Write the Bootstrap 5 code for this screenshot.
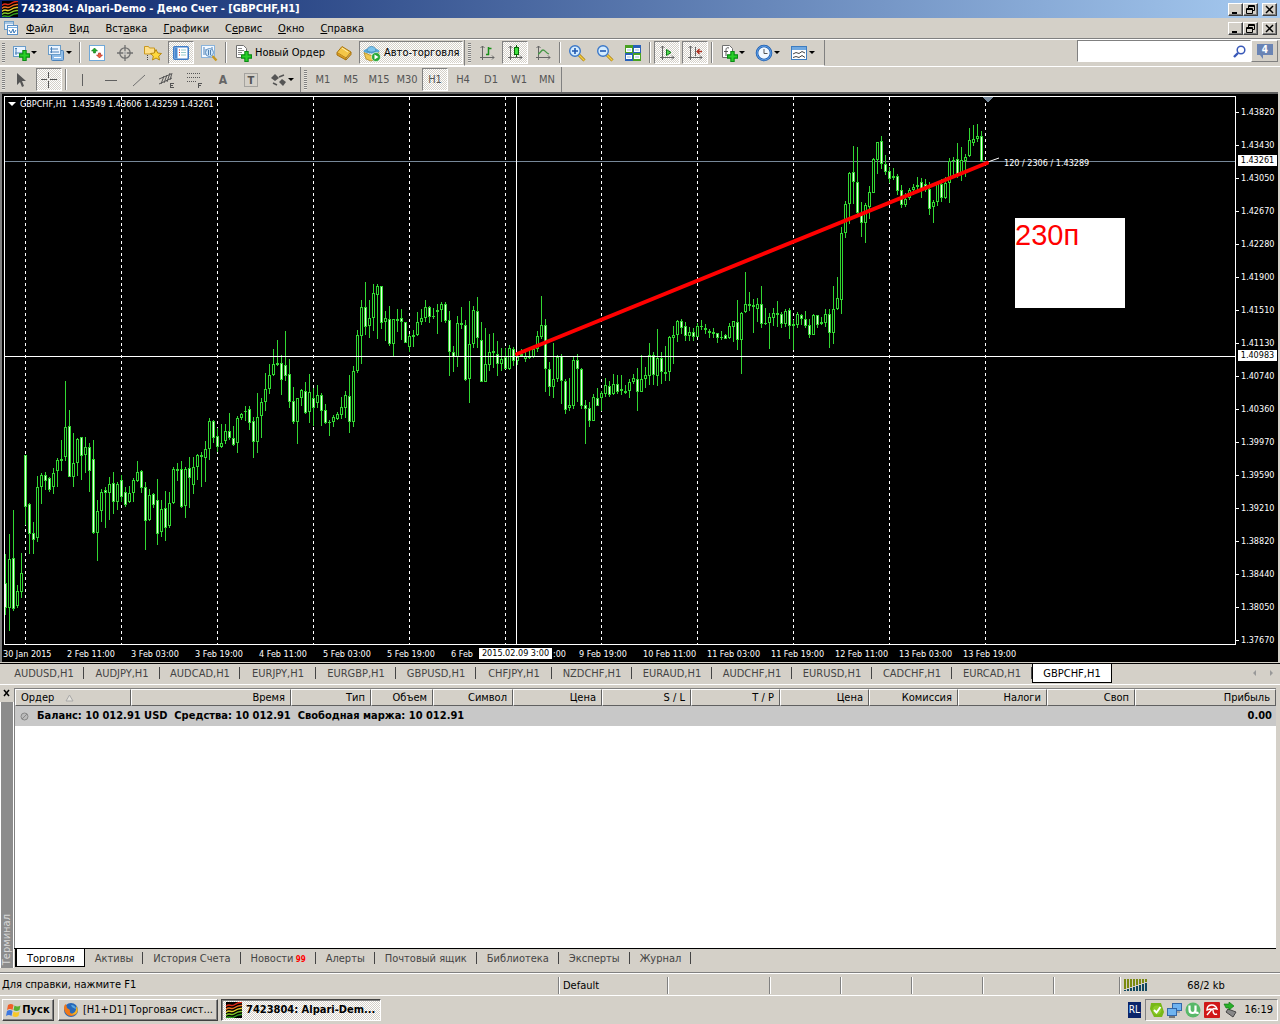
<!DOCTYPE html>
<html lang="ru">
<head>
<meta charset="utf-8">
<meta name="viewport" content="width=device-width, initial-scale=1">
<title>7423804: Alpari-Demo - Демо Счет - [GBPCHF,H1]</title>
<link href="https://cdn.jsdelivr.net/npm/bootstrap@5.3.0/dist/css/bootstrap.min.css" rel="stylesheet">
<style>
:root { --face: #d4d0c8; --shade: #808080; --checker: repeating-conic-gradient(#fff 0 25%, #d4d0c8 0 50%) 0 0 / 2px 2px; }
body { background: var(--face); color: #000; font: 11px/14px "DejaVu Sans Condensed", Tahoma, sans-serif; overflow: hidden; }
a, a:hover { color: inherit; text-decoration: none; }
button { font: inherit; color: inherit; border: 0; background: none; padding: 0; }
svg { display: block; flex: none; }
.boldface { font: bold 11px/14px "DejaVu Sans Condensed", Tahoma, sans-serif; }

.titlebar { height: 18px; background: linear-gradient(90deg, #0a246a, #a6caf0); color: #fff; padding-left: 2px; gap: 3px; }
.menubar { height: 21px; border-bottom: 1px solid var(--shade); }
.menubar nav { gap: 16px; padding: 1px 0 0 8px; }
.winbtn { width: 15px; height: 13px; background: var(--face); border: 1px solid; border-color: #fff #404040 #404040 #fff; box-shadow: inset -1px -1px var(--shade); display: flex; align-items: center; justify-content: center; }
.winbtns { padding-right: 3px; }

.toolrow { border-top: 1px solid #fff; }
.toolrow-main { height: 27px; }
.toolrow-draw { height: 26px; }
.toolgroup { height: 26px; border-right: 1px solid var(--shade); border-bottom: 1px solid #fff; padding-left: 2px; }
.toolgroup + .toolgroup { padding-left: 3px; }
.grip { width: 3px; height: 20px; margin-right: 2px; background: repeating-linear-gradient(#808080 0 1px, #e8e6e0 1px 2px); }
.toolbtn { width: 26px; height: 23px; margin: 0 1px; display: flex; align-items: center; justify-content: center; border: 1px solid transparent; }
.toolbtn.pressed { background: var(--checker); border-color: var(--shade) #fff #fff var(--shade); }
.toolbtn.drop { width: 33px; gap: 1px; }
.toolbtn.labelled { width: auto; gap: 3px; padding: 0 3px; }
.toolbtn.period { color: #555; padding-top: 1px; }
.drop::after { content: ""; border: 3px solid transparent; border-top-color: #000; border-bottom: 0; }
.vsep { width: 2px; height: 21px; margin: 0 2px; border-left: 1px solid var(--shade); border-right: 1px solid #fff; }
.searchbox { width: 174px; height: 22px; background: #fff; border: 1px solid; border-color: var(--shade) #fff #fff var(--shade); }
.searchbox input { border: 0; outline: 0; width: 148px; height: 18px; background: transparent; }
.notebtn { width: 27px; height: 22px; border: 1px solid; border-color: #fff var(--shade) var(--shade) #fff; margin-right: 2px; }

.chartwin { height: 570px; background: #000; border-top: 2px solid #606060; border-left: 2px solid var(--shade); margin-right: 2px; color: #fff; font-size: 9px; line-height: 11px; }
.plot { height: 549px; margin: 2px 0 0 2px; border: 1px solid #fff; }
#chart { width: 100%; height: 547px; }
.caption-line { left: 3px; top: 2px; }
.timeaxis { height: 17px; padding-top: 4px; }
.timeaxis span { width: 64px; flex: none; white-space: nowrap; padding-left: 1px; }
.timeaxis .cut { text-align: right; padding-right: 12px; }
.priceaxis { width: 42px; padding-top: 2px; }
.priceaxis .tick { height: 33px; }
.priceaxis .tick::before { content: ""; width: 3px; height: 1px; background: #fff; margin-right: 2px; }
.marker { background: #fff; color: #000; height: 11px; line-height: 11px; text-align: center; }
.mark-bid { right: 1px; top: 61px; width: 39px; }
.mark-cross { right: 1px; top: 256px; width: 39px; }
.mark-time { left: 477px; top: 554px; width: 73px; }
.measure { left: 999px; top: 61px; }
.notebox { left: 1010px; top: 121px; width: 110px; height: 90px; background: #fff; color: #f00; font: 29px/34px "Liberation Sans", Arial, sans-serif; }

.charttabs { height: 22px; border-top: 1px solid #000; border-bottom: 1px solid #fff; margin-top: 1px; padding-left: 4px; color: #444; }
.charttabs a { width: 80px; height: 18px; line-height: 19px; text-align: center; position: relative; }
.charttabs a.narrow { width: 76px; }
.charttabs a:not(.current)::after { content: ""; position: absolute; right: 0; top: 3px; height: 12px; border-right: 1px solid #444; }
.charttabs a.current { background: #fff; color: #000; border: 1px solid #000; border-top: 0; height: 19px; }

.terminal { height: 287px; padding: 3px 0 4px; }
.rail { width: 15px; }
.rail-body { background: #8c8c8c; border-left: 1px solid #fff; border-right: 1px solid #fff; color: #d8d8d8; width: 14px; padding-bottom: 3px; }
.rail-body span { writing-mode: vertical-rl; transform: rotate(180deg); line-height: 12px; }
.pane { background: #fff; margin-right: 4px; border-left: 1px solid var(--shade); border-top: 1px solid var(--shade); }
.orders { width: 100%; table-layout: fixed; border-collapse: separate; border-spacing: 0; }
.orders th { height: 17px; line-height: 14px; font-weight: normal; text-align: right; padding: 1px 5px 0 5px; background: var(--face); border: 1px solid; border-color: #fff #606060 #606060 #fff; }
.orders th:first-child { text-align: left; }
.orders td { height: 20px; background: #c8c8c8; padding: 0 4px 0 5px; }
.termtabs { height: 20px; border-top: 1px solid #000; margin-right: 4px; padding-left: 1px; color: #444; }
.termtabs a { height: 18px; line-height: 20px; padding: 0 10px; position: relative; white-space: nowrap; text-align: center; }
.termtabs a:not(.current)::after { content: ""; position: absolute; right: 0; top: 3px; height: 12px; border-right: 1px solid #444; }
.termtabs a.current { background: #fff; color: #000; border: 1px solid #000; border-top: 0; border-left-width: 2px; padding-right: 9px; line-height: 19px; }
.termtabs sub { color: #f00; font: bold 8px/8px "DejaVu Sans Condensed", sans-serif; bottom: 0; margin-left: -1px; }

.statusbar { height: 24px; border-top: 1px solid var(--shade); border-bottom: 1px solid #fff; box-shadow: inset 0 1px #fff; padding: 2px 0 0 2px; }
.cell { border-left: 1px solid var(--shade); box-shadow: inset 1px 0 #fff; height: 17px; padding-left: 4px; line-height: 17px; }
.c-prof { width: 109px; } .c-wide { width: 102px; } .c-std { width: 71px; } .c-last { width: 66px; } .c-conn { width: 161px; }

.taskbar { height: 28px; padding: 0 2px; }
.taskbtn { height: 22px; border: 1px solid; border-color: #fff #404040 #404040 #fff; box-shadow: inset -1px -1px var(--shade); white-space: nowrap; }
.taskbtn.active { background: var(--checker); border-color: #404040 #fff #fff #404040; box-shadow: inset 1px 1px var(--shade); }
.startbtn { width: 52px; } .winentry { width: 160px; } .winentry + .winentry { margin-left: 3px; }
.lang { width: 13px; height: 16px; line-height: 16px; background: #0a246a; color: #fff; text-align: center; font-size: 10px; }
.tray { height: 22px; width: 133px; border: 1px solid; border-color: var(--shade) #fff #fff var(--shade); }
</style>
</head>
<body>
<svg width="0" height="0" class="position-absolute" aria-hidden="true">
  <defs>
    <symbol id="alpari" viewBox="0 0 16 16"><rect width="16" height="16" fill="#000"/><g fill="none" stroke-width="1.5"><path d="M0 4.500C3 1 5 5 8 3s5-3 8-2.500" stroke="#e02818"/><path d="M0 7.500C3 4 5 8 8 6s5-3 8-2.500" stroke="#f07020"/><path d="M0 10.500C3 7 5 11 8 9s5-3 8-2.500" stroke="#e8d030"/><path d="M0 13.500C3 10 5 14 8 12s5-3 8-2.500" stroke="#80c828"/><path d="M0 16C3 13 5 17 8 15s5-3 8-2.500" stroke="#30a020"/></g></symbol>
    <symbol id="plus" viewBox="0 0 10 10"><path d="M3.5.5h3v3h3v3h-3v3h-3v-3h-3v-3h3z" fill="#28d028" stroke="#0a8a14"/></symbol>
    <symbol id="axes" viewBox="0 0 16 16"><path d="M3.500 1v14M1 12.500h14M1.500 3l2-2 2 2M13 10.500l2 2-2 2" fill="none" stroke="#666"/></symbol>
    <symbol id="mdi" viewBox="0 0 14 14"><rect x=".5" y=".5" width="9" height="8" fill="#e8f2fc" stroke="#6a9cc8"/><path d="M.5 2h9" stroke="#6a9cc8"/><rect x="3.500" y="4.500" width="10" height="9" fill="#fff" stroke="#5a90c8"/><path d="M4 6.500h9" stroke="#7ab0e0"/><path d="M5 9l2 3 2-4 1 4 2-3" fill="none" stroke="#3a78b8"/></symbol>
    <symbol id="wmin" viewBox="0 0 9 9"><path d="M1 7h5v2H1z"/></symbol>
    <symbol id="wres" viewBox="0 0 9 9"><path d="M2.500 3V.5h6v5H6.500M2.500 1.500h6M.5 3.500h6v5h-6zM.5 4.500h6" fill="none" stroke="#000"/></symbol>
    <symbol id="wcls" viewBox="0 0 9 9"><path d="M1 1l7 7M8 1L1 8" stroke="#000" stroke-width="1.500"/></symbol>
  </defs>
</svg>

<header class="titlebar d-flex align-items-center">
  <svg width="16" height="16"><use href="#alpari"/></svg>
  <span class="boldface flex-grow-1">7423804: Alpari-Demo - Демо Счет - [GBPCHF,H1]</span>
  <div class="winbtns d-flex">
    <button class="winbtn" aria-label="Свернуть"><svg width="9" height="9"><use href="#wmin"/></svg></button>
    <button class="winbtn me-1" aria-label="Восстановить"><svg width="9" height="9"><use href="#wres"/></svg></button>
    <button class="winbtn" aria-label="Закрыть"><svg width="9" height="9"><use href="#wcls"/></svg></button>
  </div>
</header>

<div class="menubar d-flex align-items-center">
  <svg width="14" height="14" class="ms-1"><use href="#mdi"/></svg>
  <nav class="d-flex flex-grow-1">
    <a href="#"><u>Ф</u>айл</a><a href="#"><u>В</u>ид</a><a href="#">Вст<u>а</u>вка</a><a href="#"><u>Г</u>рафики</a><a href="#">С<u>е</u>рвис</a><a href="#"><u>О</u>кно</a><a href="#"><u>С</u>правка</a>
  </nav>
  <div class="winbtns d-flex">
    <button class="winbtn" aria-label="Свернуть график"><svg width="9" height="9"><use href="#wmin"/></svg></button>
    <button class="winbtn me-1" aria-label="Восстановить график"><svg width="9" height="9"><use href="#wres"/></svg></button>
    <button class="winbtn" aria-label="Закрыть график"><svg width="9" height="9"><use href="#wcls"/></svg></button>
  </div>
</div>

<div class="toolrow toolrow-main d-flex">
  <div class="toolgroup d-flex align-items-center">
    <span class="grip"></span>
    <button class="toolbtn drop" aria-label="Новый график"><svg width="18" height="18" viewBox="0 0 18 18"><rect x="1.500" y="2.500" width="12" height="10" fill="#eaf4ff" stroke="#6a9cc8"/><path d="M4 4v7M3 9h9M3 5l1-1 1 1" stroke="#4a80b8" fill="none"/><use href="#plus" x="7" y="6" width="11" height="11"/></svg></button>
    <button class="toolbtn drop" aria-label="Профили"><svg width="18" height="18" viewBox="0 0 18 18"><rect x="4.500" y="6.500" width="12" height="10" rx="1" fill="#8fbce8" stroke="#4a80b8"/><path d="M7 13.500h7" stroke="#fff"/><rect x="1.500" y="1.500" width="12" height="9" fill="#eaf4ff" stroke="#6a9cc8"/><path d="M3 5h8M4.500 3v6M3 8h9" stroke="#4a80b8"/></svg></button>
    <span class="vsep"></span>
    <button class="toolbtn" aria-label="Обзор рынка"><svg width="16" height="16" viewBox="0 0 16 16"><rect x=".5" y=".5" width="15" height="15" fill="#fff" stroke="#70a8d8"/><path d="M5.500 3l3 3h-2v2h-2V6h-2z" fill="#20a828" stroke="#107818" stroke-width=".6"/><path d="M10.500 13l3-3h-2V8h-2v2h-2z" fill="#f06040" stroke="#b02010" stroke-width=".6"/></svg></button>
    <button class="toolbtn" aria-label="Окно данных"><svg width="16" height="16" viewBox="0 0 16 16" fill="none" stroke="#707070"><circle cx="8" cy="8" r="5.200" stroke-width="1.300"/><path d="M8 0v6M8 10v6M0 8h6M10 8h6" stroke-width="1.300"/><path d="M6 8h4M8 6v4" stroke="#aaa"/></svg></button>
    <button class="toolbtn" aria-label="Навигатор"><svg width="18" height="18" viewBox="0 0 18 18"><path d="M.5 2.500h4l1 1.500h5v6h-10z" fill="#ffe08a" stroke="#c89820"/><path d="M3.500 11v5" stroke="#444" stroke-dasharray="1 1"/><path d="M12 5.500l1.700 3.500 3.800.5-2.800 2.600.8 3.900-3.500-2-3.500 2 .8-3.900L6.500 9.500l3.800-.5z" fill="#ffd83c" stroke="#b88a10"/></svg></button>
    <button class="toolbtn pressed" aria-label="Терминал"><svg width="16" height="14" viewBox="0 0 16 14"><rect x=".75" y=".75" width="14.500" height="12.500" rx="1" fill="#fff" stroke="#3c7cc8" stroke-width="1.500"/><path d="M1.500 1.500h3v11h-3z" fill="#4a88d0"/><path d="M6 4h1M6 6.500h1M6 9h1" stroke="#e03020"/><path d="M8 4h5M8 6.500h5M8 9h5" stroke="#9cc"/></svg></button>
    <button class="toolbtn" aria-label="Тестер стратегий"><svg width="18" height="18" viewBox="0 0 18 18"><rect x="1.500" y="1.500" width="13" height="12" fill="#f4f9ff" stroke="#8ab4dc"/><path d="M4 3v8M6 5v6M12 3v7" stroke="#4a80b8"/><circle cx="9.500" cy="8.500" r="4" fill="#cfe6fa" stroke="#6090c0"/><path d="M8.500 6v5M10.500 6v5" stroke="#5080b0"/><path d="M12.500 12l4 4.500" stroke="#c89820" stroke-width="2.400"/></svg></button>
    <span class="vsep"></span>
    <button class="toolbtn labelled"><svg width="18" height="18" viewBox="0 0 18 18"><path d="M2.500 1.500h7l3 3v9h-10z" fill="#fff" stroke="#707070"/><path d="M4 4.500h4M4 6.500h6M4 8.500h4M4 10.500h3" stroke="#888"/><use href="#plus" x="7" y="7" width="11" height="11"/></svg>Новый Ордер</button>
    <button class="toolbtn" aria-label="MetaEditor"><svg width="18" height="18" viewBox="0 0 18 18"><path d="M7 2.500L16 8l-5 6-9-5.500z" fill="#f4c648" stroke="#a87410"/><path d="M2 8.500v2.500l9 5V14M11 16l5-5.500V8" fill="#d89a20" stroke="#a87410"/><path d="M7 4l6 4" stroke="#fff0b0"/></svg></button>
    <button class="toolbtn labelled pressed"><svg width="18" height="18" viewBox="0 0 18 18"><path d="M1 8.500l7 3 8-3-2 6-6 2.500-5-2z" fill="#f0c850" stroke="#b08820" stroke-width=".8"/><ellipse cx="8.500" cy="7" rx="8" ry="2.600" fill="#58a8d8"/><path d="M4 7c0-6 9-6 9 0-3 1.500-6 1.500-9 0z" fill="#7cc4ec" stroke="#3c88b8" stroke-width=".8"/><circle cx="13" cy="13" r="4.500" fill="#28a838" stroke="#fff" stroke-width=".6"/><path d="M11.500 10.500l4 2.500-4 2.500z" fill="#fff"/></svg>Авто-торговля</button>
  </div>
  <div class="toolgroup d-flex align-items-center pe-1">
    <span class="grip"></span>
    <button class="toolbtn" aria-label="Бары"><svg width="16" height="16"><use href="#axes"/><path d="M9.500 2v8M9.500 3.500h3M7 9.500h3" stroke="#189018" fill="none" stroke-width="1.500"/></svg></button>
    <button class="toolbtn pressed" aria-label="Свечи"><svg width="16" height="16"><use href="#axes"/><path d="M9.500 0v12" stroke="#086808"/><rect x="7.500" y="2.500" width="4" height="7" fill="#40e040" stroke="#086808"/></svg></button>
    <button class="toolbtn" aria-label="Линия"><svg width="16" height="16"><use href="#axes"/><path d="M3 9c2 0 3-4 5-4s3 3 6 4" stroke="#489848" fill="none" stroke-width="1.300"/></svg></button>
    <span class="vsep"></span>
    <button class="toolbtn" aria-label="Увеличить"><svg width="18" height="18" viewBox="0 0 18 18"><path d="M11 11l5.500 5.500" stroke="#a87c10" stroke-width="3"/><path d="M11 11l5.500 5.500" stroke="#f4d040" stroke-width="1.500"/><circle cx="7" cy="7" r="5.300" fill="#d4ecff" stroke="#3c78c8" stroke-width="1.400"/><path d="M4 7h6M7 4v6" stroke="#2058b0" stroke-width="1.600"/></svg></button>
    <button class="toolbtn" aria-label="Уменьшить"><svg width="18" height="18" viewBox="0 0 18 18"><path d="M11 11l5.500 5.500" stroke="#a87c10" stroke-width="3"/><path d="M11 11l5.500 5.500" stroke="#f4d040" stroke-width="1.500"/><circle cx="7" cy="7" r="5.300" fill="#d4ecff" stroke="#3c78c8" stroke-width="1.400"/><path d="M4 7h6" stroke="#2058b0" stroke-width="1.600"/></svg></button>
    <button class="toolbtn" aria-label="Плитка"><svg width="16" height="16" viewBox="0 0 16 16"><path fill="#48a020" d="M0 0h8v8H0z"/><path fill="#2860b8" d="M8 0h8v8H8z"/><path fill="#2860b8" d="M0 8h8v8H0z"/><path fill="#48a020" d="M8 8h8v8H8z"/><path fill="#fff" d="M1 3h6v4H1zM9 3h6v4H9zM1 10h6v4H1zM9 10h6v4H9z"/><path d="M2 5h4M10 5h4M2 12h4M10 12h4" stroke="#9bd"/></svg></button>
    <span class="vsep"></span>
    <button class="toolbtn pressed" aria-label="Автопрокрутка"><svg width="16" height="16"><use href="#axes"/><path d="M7.500 4.500l4.500 3-4.500 3z" fill="#50d850" stroke="#107818"/></svg></button>
    <button class="toolbtn pressed" aria-label="Сдвиг графика"><svg width="16" height="16"><use href="#axes"/><path d="M8.500 2v9" stroke="#666"/><path d="M15 6.500H10M12.500 4L10 6.500 12.500 9" stroke="#b03020" fill="none" stroke-width="1.400"/></svg></button>
    <span class="vsep"></span>
    <button class="toolbtn drop" aria-label="Индикаторы"><svg width="18" height="18" viewBox="0 0 18 18"><path d="M2.500 1.500h7l3 3v9h-10z" fill="#fff" stroke="#707070"/><path d="M9 4c-3-1-3 1-3 3v5M4 7.500h4" stroke="#555" fill="none"/><use href="#plus" x="7" y="7" width="11" height="11"/></svg></button>
    <button class="toolbtn drop" aria-label="Периоды"><svg width="18" height="18" viewBox="0 0 18 18"><circle cx="9" cy="9" r="7" fill="#f0f8ff" stroke="#1c5cb0" stroke-width="2.600"/><circle cx="9" cy="9" r="7" fill="none" stroke="#68a8ec" stroke-width="1"/><path d="M9 5v4.500h3.500" stroke="#555" fill="none"/></svg></button>
    <button class="toolbtn drop" aria-label="Шаблоны"><svg width="18" height="16" viewBox="0 0 18 16"><rect x="1.500" y="1.500" width="15" height="13" fill="#fff" stroke="#3c7cc0"/><path fill="#70a8e0" d="M2 2h14v3H2z"/><path d="M3 9l3-1.500 3 1 3-2 3 1.500M3 12.500l3-1 3 1 3-2 3 2" stroke="#444" fill="none"/></svg></button>
  </div>
  <form class="d-flex ms-auto">
    <label class="searchbox d-flex align-items-center justify-content-between pe-1"><input type="text" aria-label="Поиск"><svg width="13" height="13" viewBox="0 0 13 13" fill="none" stroke="#3858b8"><circle cx="8" cy="5" r="3.800" stroke-width="1.500"/><path d="M5 8l-4 4" stroke-width="2.400"/></svg></label>
    <button type="button" class="notebtn d-flex align-items-center justify-content-center" aria-label="Сообщения"><svg width="16" height="16" viewBox="0 0 16 16"><path d="M0 1h16v11H6v4l-3-4H0z" fill="#6a84b4"/><text x="8" y="10" text-anchor="middle" font-size="10" font-weight="bold" fill="#fff">4</text></svg></button>
  </form>
</div>

<div class="toolrow toolrow-draw d-flex">
  <div class="toolgroup d-flex align-items-center">
    <span class="grip"></span>
    <button class="toolbtn" aria-label="Курсор"><svg width="12" height="16" viewBox="0 0 12 16"><path d="M2 1v12l3-3 2 5 2-1-2-5h4z" fill="#555"/></svg></button>
    <button class="toolbtn pressed" aria-label="Перекрестие"><svg width="16" height="16" stroke="#555"><path d="M7.500 0v6M7.500 9v7M0 7.500h6M9 7.500h7"/></svg></button>
    <span class="vsep"></span>
    <button class="toolbtn" aria-label="Вертикальная линия"><svg width="16" height="16" stroke="#606060"><path d="M7.500 2v12"/></svg></button>
    <button class="toolbtn" aria-label="Горизонтальная линия"><svg width="16" height="16" stroke="#606060"><path d="M2 8.500h12"/></svg></button>
    <button class="toolbtn" aria-label="Трендовая линия"><svg width="16" height="16" stroke="#707070"><path d="M2 14L14 3"/></svg></button>
    <button class="toolbtn" aria-label="Канал"><svg width="18" height="18" viewBox="0 0 18 18" stroke="#555" fill="none"><path d="M1 8l12-5M1 13l13-6M3 13l3-8M6 12l3-8M9 11l3-9M12 9l2-7"/><path d="M12.500 12v5M12 12.500h4M12 14.500h3M12 16.500h4"/></svg></button>
    <button class="toolbtn" aria-label="Фибоначчи"><svg width="18" height="18" viewBox="0 0 18 18" stroke="#555" fill="none"><path d="M1 2.500h14M1 6.500h14M1 10.500h9" stroke-dasharray="1 1"/><path d="M12.500 12v5M12 12.500h4M12 14.500h3"/></svg></button>
    <button class="toolbtn" aria-label="Текст"><svg width="14" height="16" viewBox="0 0 14 16"><text x="7" y="12" text-anchor="middle" font-size="12" font-weight="bold" fill="#666">A</text></svg></button>
    <button class="toolbtn" aria-label="Метка"><svg width="14" height="14" viewBox="0 0 14 14"><rect x=".5" y=".5" width="13" height="13" fill="none" stroke="#777" stroke-dasharray="1 1"/><text x="7" y="11" text-anchor="middle" font-size="11" font-weight="bold" fill="#555">T</text></svg></button>
    <button class="toolbtn drop" aria-label="Стрелки"><svg width="16" height="14" viewBox="0 0 16 14"><path d="M4 1l4 4-4 3-4-3zM11 6l4 3-3 4-4-4z" fill="#555"/><path d="M8 4l5-2M2 10l4 2" stroke="#555" stroke-width="1.500"/></svg></button>
  </div>
  <div class="toolgroup d-flex align-items-center">
    <span class="grip"></span>
    <button class="toolbtn period">M1</button><button class="toolbtn period">M5</button><button class="toolbtn period">M15</button><button class="toolbtn period">M30</button><button class="toolbtn period pressed">H1</button><button class="toolbtn period">H4</button><button class="toolbtn period">D1</button><button class="toolbtn period">W1</button><button class="toolbtn period">MN</button>
  </div>
</div>

<main>
  <section class="chartwin d-flex position-relative">
    <div class="flex-grow-1 overflow-hidden">
      <div class="plot position-relative overflow-hidden">
        <svg id="chart" shape-rendering="crispEdges"></svg>
        <div class="caption-line position-absolute d-flex align-items-center gap-1 text-nowrap"><svg width="8" height="5"><path d="M0 0h8L4 4z" fill="#fff"/></svg><span>GBPCHF,H1&nbsp; 1.43549 1.43606 1.43259 1.43261</span></div>
        <div class="measure position-absolute">120 / 2306 / 1.43289</div>
        <div class="notebox position-absolute">230п</div>
      </div>
      <div class="timeaxis d-flex" id="times"></div>
    </div>
    <div class="priceaxis" id="prices"></div>
    <div class="marker mark-bid position-absolute">1.43261</div>
    <div class="marker mark-cross position-absolute">1.40983</div>
    <div class="marker mark-time position-absolute text-nowrap">2015.02.09 3:00</div>
  </section>

  <nav class="charttabs d-flex">
    <a href="#">AUDUSD,H1</a><a href="#" class="narrow">AUDJPY,H1</a><a href="#">AUDCAD,H1</a><a href="#" class="narrow">EURJPY,H1</a><a href="#">EURGBP,H1</a><a href="#">GBPUSD,H1</a><a href="#" class="narrow">CHFJPY,H1</a><a href="#">NZDCHF,H1</a><a href="#">EURAUD,H1</a><a href="#">AUDCHF,H1</a><a href="#">EURUSD,H1</a><a href="#">CADCHF,H1</a><a href="#">EURCAD,H1</a><a href="#" class="current">GBPCHF,H1</a>
    <svg class="ms-auto me-1 mt-1" width="24" height="10"><path d="M4 2v6L1 5zM18 2v6l3-3z" fill="#999"/></svg>
  </nav>

  <section class="terminal d-flex">
    <div class="rail d-flex flex-column">
      <button aria-label="Закрыть терминал"><svg width="14" height="14"><path d="M4 2l5 6M9 2L4 8" stroke="#000" stroke-width="1.500"/></svg></button>
      <div class="rail-body flex-grow-1 d-flex align-items-end"><span>Терминал</span></div>
    </div>
    <div class="flex-grow-1 d-flex flex-column">
      <div class="pane flex-grow-1">
        <table class="orders">
          <colgroup id="cols"></colgroup>
          <thead><tr><th>Ордер <svg class="d-inline ms-2" width="9" height="8"><path d="M4.500 1L1 7h7z" fill="#e4e2dc" stroke="#a8a8a8"/></svg></th><th>Время</th><th>Тип</th><th>Объем</th><th>Символ</th><th>Цена</th><th>S / L</th><th>T / P</th><th>Цена</th><th>Комиссия</th><th>Налоги</th><th>Своп</th><th>Прибыль</th></tr></thead>
          <tbody class="boldface"><tr><td colspan="12"><div class="d-flex align-items-center gap-2"><svg width="9" height="9"><circle cx="4.500" cy="4.500" r="3.500" fill="#bbb" stroke="#888"/><path d="M2 7l5-5" stroke="#888"/></svg><span>Баланс: 10 012.91 USD&nbsp; Средства: 10 012.91&nbsp; Свободная маржа: 10 012.91</span></div></td><td class="text-end">0.00</td></tr></tbody>
        </table>
      </div>
      <nav class="termtabs d-flex">
        <a href="#" class="current">Торговля</a><a href="#">Активы</a><a href="#">История Счета</a><a href="#">Новости <sub>99</sub></a><a href="#">Алерты</a><a href="#">Почтовый ящик</a><a href="#">Библиотека</a><a href="#">Эксперты</a><a href="#">Журнал</a>
      </nav>
    </div>
  </section>
</main>

<footer>
  <div class="statusbar d-flex align-items-center">
    <span class="flex-grow-1">Для справки, нажмите F1</span>
    <span class="cell c-prof">Default</span><span class="cell c-wide"></span><span class="cell c-std"></span><span class="cell c-std"></span><span class="cell c-std"></span><span class="cell c-std"></span><span class="cell c-last"></span>
    <span class="cell c-conn d-flex align-items-center"><svg width="24" height="12" id="traffic"></svg><span class="flex-grow-1 text-center pe-3">68/2 kb</span></span>
  </div>
  <div class="taskbar d-flex align-items-center">
    <button class="taskbtn startbtn boldface d-flex align-items-center justify-content-center"><svg width="16" height="16" viewBox="0 0 16 16"><path d="M2 3q3-2 5.500 0L6.500 8Q4 6 1 8z" fill="#f06028"/><path d="M8.500 3.500q3 2 6 0L13.500 8q-3 2-6 0z" fill="#58b030"/><path d="M1 9q3-2 5.500 0l-1 5Q3 12 0 14z" fill="#3c78e0"/><path d="M7.500 9.500q3 2 6 0L12.500 14q-3 2-6 0z" fill="#f8c828"/></svg>Пуск</button>
    <button class="taskbtn winentry d-flex align-items-center gap-1 ms-1 ps-1"><svg width="16" height="16" viewBox="0 0 16 16"><circle cx="8" cy="8" r="7" fill="#2868b8"/><path d="M8 3c3 0 5 2 5 4-2-1-3-1-4-2z" fill="#58a8e0"/><path d="M1 5c0 9 8 11 12 7-4 1-7-1-6-4L4 6 3 2Q1 3 1 5z" fill="#f07818"/><path d="M13 12c3-3 2-6 0-8 1 5-2 8-6 8 2 1 4 1 6 0z" fill="#f8b020"/></svg>[H1+D1] Торговая сист...</button>
    <button class="taskbtn winentry active boldface d-flex align-items-center gap-1 ps-1"><svg width="16" height="16"><use href="#alpari"/></svg>7423804: Alpari-Dem...</button>
    <span class="lang ms-auto me-1">RL</span>
    <div class="tray d-flex align-items-center justify-content-between px-1">
      <svg width="14" height="14" viewBox="0 0 14 14"><path d="M1 0h10l3 9-2 5H4L0 6z" fill="#78b818"/><circle cx="7" cy="7" r="4.500" fill="#8ccc28"/><path d="M4 7l2.500 2.500L10.500 4" stroke="#fff" stroke-width="2" fill="none"/></svg>
      <svg width="15" height="15" viewBox="0 0 15 15"><rect x="5.500" y=".5" width="9" height="7" fill="#70b4f0" stroke="#3468a8"/><path d="M8 9h5" stroke="#777"/><rect x=".5" y="5.500" width="9" height="7" fill="#70b4f0" stroke="#3468a8"/><path d="M2 14h6" stroke="#777" stroke-width="2"/></svg>
      <svg width="16" height="16" viewBox="0 0 16 16"><circle cx="8" cy="8" r="7.500" fill="#58b868"/><path d="M4.500 3.500v4q0 3.500 3 3.500t3-3v-4.500M10.500 10q1 1.500 3 .5" stroke="#fff" stroke-width="2.200" fill="none"/></svg>
      <svg width="16" height="16" viewBox="0 0 16 16"><rect width="16" height="16" rx="1" fill="#d01818"/><path d="M3 8C3 2 11 1 13 7l-3-.5-2 1-2-.5z" fill="none" stroke="#fff" stroke-width="1.400"/><path d="M8 7l-5 6M9 8c0 4 2 5 4 4" stroke="#fff" stroke-width="1.400" fill="none"/></svg>
      <svg width="14" height="16" viewBox="0 0 14 16"><path d="M5 7l8 3-3 5-7-5z" fill="#888" stroke="#444"/><path d="M1 2h5V0l5 4-5 4V6H3z" fill="#28b028" stroke="#0a700a" stroke-width=".6"/></svg>
      <span class="ps-1">16:19</span>
    </div>
  </div>
</footer>

<script src="https://cdn.jsdelivr.net/npm/bootstrap@5.3.0/dist/js/bootstrap.bundle.min.js"></script>
<script>
// Hourly candles: high, low, body top, body bottom, in thirds of a pixel below the base of their run; "d" marks a falling candle.
const runs = [
 [360, "583 765 668 745d|522 812 598 745|450 752 595 748d|675 745 693 738|580 715 640 695|286 495 286 440d|430 583 432 523d|485 583 520 540d|348 547 382 535|340 432 346 380|337 390 346 362d|352 395 354 390d|324 402 340 382|294 380 300 332|240 332 298 302|63 303 202 292|150 350 199 350d|220 380 310 350|235 348 237 308|231 360 232 287d|232 338 262 286|250 395 262 334d|240 522 297 520d|420 602 454 520|387 487 395 452|382 503 391 400d|350 480 372 400|336 462 370 425d|366 450 373 425|346 425 361 412d|382 440 396 434d|379 430 400 427|355 425 361 398|303 366 336 362|330 400 334 383d|366 570 380 482d|388 482 404 479|400 443 401 434d|357 556 420 523d|420 532 448 517|394 543 445 503d|396 505 430 499|321 432 327 430|310 363 327 333|302 445 327 440d|322 475 328 437|290 443 325 353d|290 402 322 374|282 360 286 322|275 380 285 292d|244 365 268 293|175 300 184 268|180 250 184 233d|205 275 229 262d|192 264 250 262|193 253 214 242|160 240 213 235d|198 258 233 255d|168 279 175 250|158 181 163 173|138 182 153 157|138 210 148 190d|170 293 184 247d"],
 [260, "400 580 472 545|414 535 427 467|340 453 388 425|312 402 346 388|266 347 313 346|240 319 310 314|285 405 310 359d|212 364 316 347d|297 443 343 425d|381 493 424 486d|414 552 415 486|387 438 391 415|366 461 393 458d|342 490 397 455|385 497 415 443d|375 443 405 428|400 498 405 452d|432 492 450 488d|480 528 486 490|464 502 472 487|455 480 462 476|410 478 442 464|393 475 406 443|345 519 407 486d|318 500 334 485|210 340 226 334|120 313 142 229|66 225 142 200d|120 235 175 199|72 213 100 175|73 238 78 105|78 208 79 188d|153 242 175 187|138 258 176 251d|176 287 178 251|146 215 177 182|147 240 175 187d|187 248 187 248d|222 275 229 262|211 262 226 230|157 229 187 226|148 195 175 186|121 187 142 175|138 190 142 170d|145 177 167 170|132 222 150 157|127 187 133 150|127 190 133 182d|153 347 181 277d|257 335 276 291d|167 320 190 291|142 207 190 195|180 362 196 360d|122 430 253 357|138 264 151 253|111 264 153 235d|187 366 240 365d|205 365 313 365|222 333 276 314|220 323 274 280|243 347 282 311d|265 332 297 311|265 327 291 326d|255 329 265 328|262 318 267 303d|280 315 291 303|268 292 283 288|277 305 288 296|270 296 290 293|262 293 268 290|213 275 229 268|108 236 196 230|178 395 195 328d|306 407 327 380d|250 413 358 382|286 365 290 358|281 432 289 363d|357 463 363 450d|353 453 436 445|291 446 300 438|282 427 300 328d|325 447 328 438d|421 553 436 448d|425 500 444 482d|402 484 411 482|385 438 415 437d|394 452 398 415|354 411 375 401|364 411 378 405d|342 406 373 403|345 403 373 397d|346 405 388 392|374 402 393 398|358 413 366 394|343 372 355 367|323 453 357 395d|285 397 358 395|322 383 346 358|249 375 286 347|276 375 285 346d|207 377 294 347|276 372 295 335d|258 364 336 341|227 364 231 335|197 312 225 233|180 245 184 224|178 221 183 204d|187 243 198 228d|201 243 215 228|204 243 216 231d|190 231 199 230|181 210 197 202|193 222 204 211d|208 234 214 220d|205 233 216 221|218 249 220 234d|212 240 230 234|222 238 224 237d|190 237 199 235|182 245 184 201|120 270 186 239d|156 342 158 239|36 159 132 157|96 153 132 137|117 218 135 142d|115 185 133 146|78 204 132 191d|145 196 188 192|158 267 170 190|144 199 160 173"],
 [110, "573 650 609 614|606 653 613 641d|598 650 604 641|594 686 600 649d|631 720 641 648|606 655 612 644|612 645 614 628d|604 655 626 648d|628 683 646 675d|612 675 615 674|615 654 616 646d|622 645 637 642|598 652 613 638|598 713 613 668d|528 702 598 668|502 600 565 598|352 613 370 570|272 384 283 369|187 342 190 283|107 283 187 217d|111 316 217 310d|277 382 310 338d|278 398 286 338|228 328 247 290|144 248 147 248|96 193 97 149|79 178 93 163d|136 196 163 186d|170 218 184 207d|175 210 199 203|193 255 199 243d|225 294 241 285d|250 291 266 286|234 270 240 264|222 255 230 240|202 250 226 230|205 265 217 240d|207 245 222 240d|217 316 238 297d|270 338 277 292|218 288 222 277|208 276 222 263d|200 268 218 263|145 280 153 220|142 205 150 153|98 205 148 195d|112 213 150 190|132 200 140 153|55 140 90 139|45 109 86 98|42 95 79 87|63 155 79 153d"]
];
let out = '<g transform="translate(-5,-97)">';
for (let x = 25; x < 990; x += 96) out += `<path d="M${x + .5} 97V645" stroke="#fff" stroke-dasharray="3 3"/>`;
out += '<path d="M5 161.5H5000" stroke="#778899"/>';
let x = 5;
for (const [base, text] of runs) for (const row of text.split("|")) {
  const falling = row.endsWith("d");
  const [h, l, t, b] = row.split(" ").map(v => Math.round(base + parseInt(v) / 3));
  const bh = Math.max(b - t, 1);
  out += `<rect x="${x}" y="${h}" width="1" height="${Math.max(l - h, 1)}" fill="#32d732"/><rect x="${x - 1}" y="${t}" width="3" height="${bh}" fill="#32d732"/>`;
  if (bh > 2) out += `<rect x="${x}" y="${t + 1}" width="1" height="${bh - 2}" fill="${falling ? "#e8ffe4" : "#000"}"/>`;
  x += 4;
}
out += '<path d="M5 356.5H5000M516.500 97V645" stroke="#fff"/><path d="M983 97h10l-5 6z" fill="#778899"/>' +
  '<path d="M985 163l14-5" stroke="#fff" shape-rendering="auto"/><path d="M517 354L987 163" stroke="#f00" stroke-width="4" stroke-linecap="round" shape-rendering="auto"/></g>';
document.getElementById("chart").innerHTML = out;

document.getElementById("times").innerHTML = ["30 Jan 2015", "2 Feb 11:00", "3 Feb 03:00", "3 Feb 19:00", "4 Feb 11:00", "5 Feb 03:00", "5 Feb 19:00", "6 Feb", ":00", "9 Feb 19:00", "10 Feb 11:00", "11 Feb 03:00", "11 Feb 19:00", "12 Feb 11:00", "13 Feb 03:00", "13 Feb 19:00"]
  .map(t => `<span${t[0] === ":" ? ' class="cut"' : ""}>${t}</span>`).join("");
document.getElementById("prices").innerHTML = ["1.43820", "1.43430", "1.43050", "1.42670", "1.42280", "1.41900", "1.41510", "1.41130", "1.40740", "1.40360", "1.39970", "1.39590", "1.39210", "1.38820", "1.38440", "1.38050", "1.37670"]
  .map(p => `<div class="tick d-flex align-items-center">${p}</div>`).join("");
document.getElementById("cols").innerHTML = [116, 160, 80, 62, 80, 89, 89, 89, 89, 89, 89, 88].map(w => `<col style="width:${w}px">`).join("") + "<col>";
let bars = "";
for (let i = 0; i < 8; i++) bars += `<rect x="${i * 3}" y="0" width="2" height="${10 - i}" fill="#7a8a10"/><rect x="${i * 3}" y="${11 - i}" width="2" height="${i + 1}" fill="#104860"/>`;
document.getElementById("traffic").innerHTML = bars;
</script>
</body>
</html>
